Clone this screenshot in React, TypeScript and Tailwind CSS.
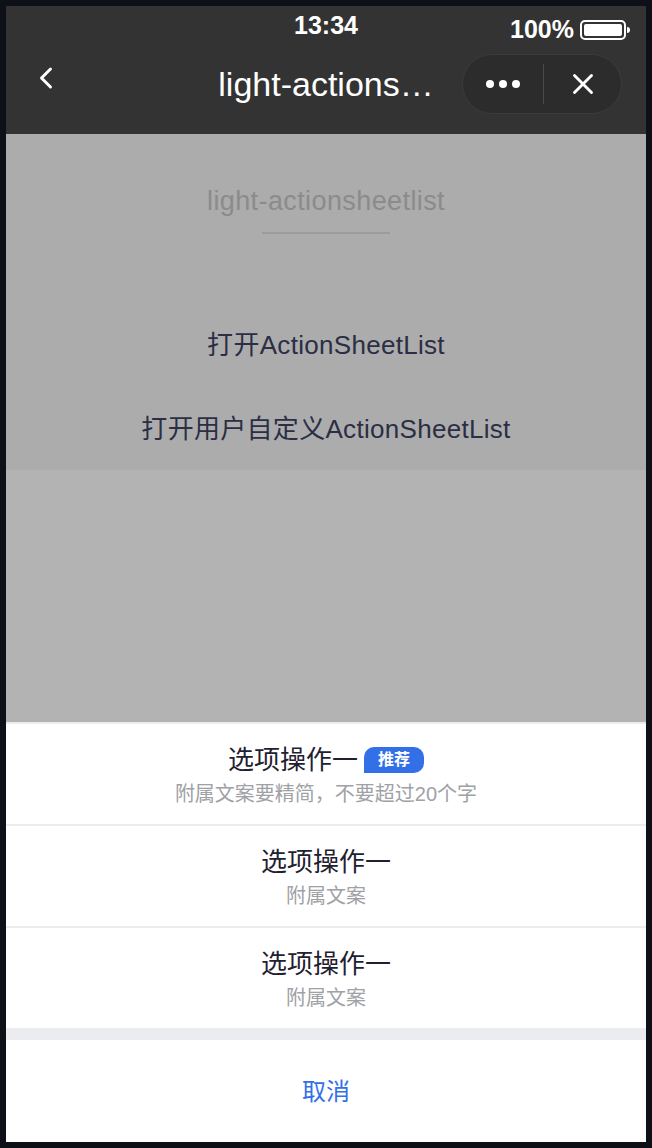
import { ChevronLeft, X } from 'lucide-react'

const font = { fontFamily: '"Liberation Sans", "Noto Sans CJK SC", sans-serif' }

function Battery() {
  return (
    <svg width="50" height="22" viewBox="0 0 50 22">
      <rect x="1" y="2" width="44" height="18" rx="4" fill="none" stroke="#fff" strokeWidth="2" />
      <rect x="4" y="5" width="38" height="12" rx="2" fill="#fff" />
      <path d="M47 8 a3 3 0 0 1 0 6 z" fill="#fff" />
    </svg>
  )
}

function SheetRow({ title, sub, badge, last }: { title: string; sub: string; badge?: boolean; last?: boolean }) {
  return (
    <div
      className={`flex flex-col items-center justify-center ${
        last ? 'h-[100px]' : 'h-[102px] border-b-2 border-[#ebecf0]'
      }`}
    >
      <div className="flex items-center gap-[6px] h-[32px]">
        <span className="text-[26px] text-[#1f2130] leading-none">{title}</span>
        {badge && (
          <span className="bg-[#3370e8] text-white text-[16px] font-bold leading-none rounded-[10px] rounded-bl-none h-[26px] px-[14px] flex items-center">
            推荐
          </span>
        )}
      </div>
      <span className="text-[20px] text-[#a0a1a5] leading-none mt-[8px]">{sub}</span>
    </div>
  )
}

export default function App() {
  return (
    <div className="w-[652px] h-[1148px] bg-[#0d1117] p-[6px]" style={font}>
      <div className="w-[640px] h-[1136px] flex flex-col overflow-hidden">
        <div className="bg-[#333333] h-[128px] shrink-0">
          <div className="h-[40px] relative flex items-center justify-center">
            <span className="text-white text-[25px] font-semibold">13:34</span>
            <div className="absolute right-[16px] top-[5px] flex items-center gap-[6px]">
              <span className="text-white text-[25px] font-semibold">100%</span>
              <Battery />
            </div>
          </div>
          <div className="h-[88px] relative flex items-center justify-center">
            <ChevronLeft className="absolute left-[22px] top-[14px]" size={36} color="#fff" strokeWidth={2} />
            <span className="text-white text-[34px] font-medium -mt-[12px]">light-actions…</span>
            <div className="absolute right-[24px] top-[8px] w-[160px] h-[60px] rounded-full bg-[#2c2c2c] border border-[#3b3b3b] flex items-center">
              <div className="w-[80px] flex items-center justify-center gap-[5px]">
                <span className="w-[8px] h-[8px] rounded-full bg-white" />
                <span className="w-[8px] h-[8px] rounded-full bg-white" />
                <span className="w-[8px] h-[8px] rounded-full bg-white" />
              </div>
              <div className="w-px h-[40px] bg-[#4a4a4a]" />
              <div className="flex-1 flex items-center justify-center">
                <X size={34} color="#fff" strokeWidth={2} />
              </div>
            </div>
          </div>
        </div>

        <div className="bg-[#acacac] h-[336px] shrink-0 flex flex-col items-center">
          <span className="mt-[54px] text-[27px] tracking-[0.4px] text-[#8b8b8b] leading-none">light-actionsheetlist</span>
          <div className="mt-[17px] w-[128px] h-[2px] bg-[#9c9c9c]" />
          <span className="mt-[98px] text-[26px] tracking-[0.3px] text-[#2b2e45] leading-none">打开ActionSheetList</span>
          <span className="mt-[58px] text-[26px] tracking-[0.3px] text-[#2b2e45] leading-none">打开用户自定义ActionSheetList</span>
        </div>

        <div className="bg-[#b3b3b3] flex-1" />

        <div className="bg-white border-t-2 border-[#ebecf0] shrink-0">
          <SheetRow title="选项操作一" sub="附属文案要精简，不要超过20个字" badge />
          <SheetRow title="选项操作一" sub="附属文案" />
          <SheetRow title="选项操作一" sub="附属文案" last />
          <div className="h-[12px] bg-[#ebecf0]" />
          <div className="h-[102px] flex items-center justify-center">
            <span className="text-[24px] text-[#3370e8] mt-[2px]">取消</span>
          </div>
        </div>
      </div>
    </div>
  )
}
